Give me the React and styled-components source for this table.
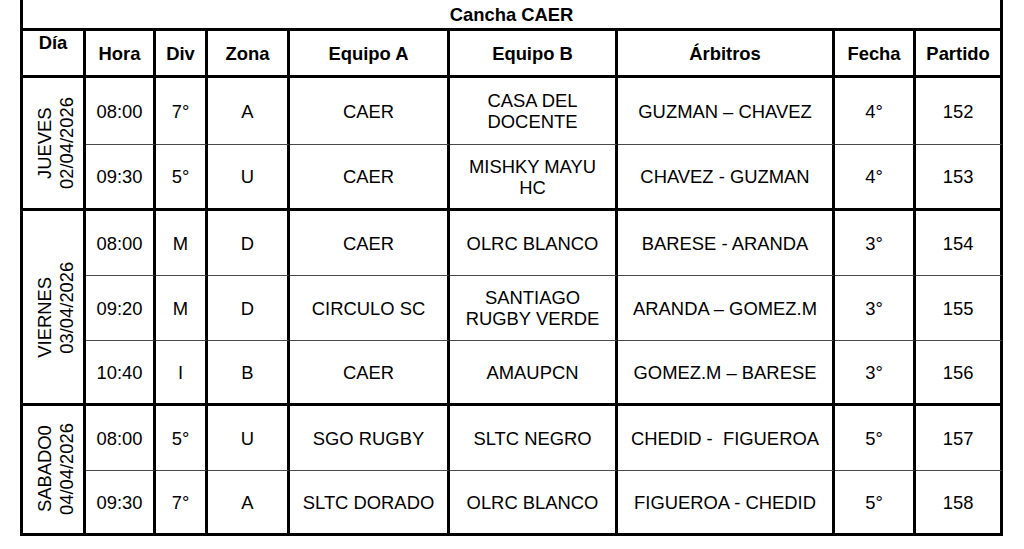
import React from "react";
import styled, { createGlobalStyle } from "styled-components";

const GlobalStyle = createGlobalStyle`
  html, body {
    margin: 0;
    padding: 0;
    background: #ffffff;
  }
  body {
    font-family: "Liberation Sans", Arial, sans-serif;
    color: #000;
  }
`;

const Page = styled.div`
  padding-left: 20px;
  width: 1024px;
  height: 549px;
  box-sizing: border-box;
  overflow: hidden;
`;

const Table = styled.table`
  border-collapse: separate;
  border-spacing: 0;
  table-layout: fixed;
  width: 983px;
  border-left: 3px solid #000;
  font-size: 18.4px;
  line-height: 21px;
`;

const Row = styled.tr`
  height: ${(p) => p.$h}px;
`;

const TitleCell = styled.th`
  padding: 0;
  border-right: 3px solid #000;
  border-bottom: 3px solid #000;
  font-weight: bold;
  text-align: center;
  vertical-align: middle;
`;

const HeadCell = styled.th`
  padding: ${(p) => (p.$top ? "1px 0 0" : "0")};
  border-right: 3px solid #000;
  border-bottom: 3px solid #000;
  font-weight: bold;
  text-align: center;
  vertical-align: ${(p) => (p.$top ? "top" : "middle")};
`;

const DayCell = styled.td`
  padding: 0 0 0 6px;
  border-right: 3px solid #000;
  border-bottom: 3px solid #000;
  text-align: center;
  vertical-align: middle;
`;

const DayLabel = styled.div`
  writing-mode: vertical-rl;
  transform: rotate(180deg);
  text-align: center;
  margin: 0 auto;
  line-height: 22px;
`;

const DayName = styled.span`
  display: inline-block;
  padding-inline-end: ${(p) => p.$shift || 0}px;
`;

const Cell = styled.td`
  padding: 0 2px;
  border-right: 3px solid #000;
  border-bottom: ${(p) => (p.$last ? "3px solid #000" : "1px solid #4a4a4a")};
  text-align: center;
  vertical-align: middle;
`;

const widths = [63, 70, 52, 82, 160, 168, 217, 81, 87];
const headers = ["Hora", "Div", "Zona", "Equipo A", "Equipo B", "Árbitros", "Fecha", "Partido"];

const groups = [
  {
    day: "JUEVES",
    date: "02/04/2026",
    shift: 0,
    rows: [
      { h: 67, c: ["08:00", "7°", "A", "CAER", ["CASA DEL", "DOCENTE"], "GUZMAN – CHAVEZ", "4°", "152"] },
      { h: 66, c: ["09:30", "5°", "U", "CAER", ["MISHKY MAYU", "HC"], "CHAVEZ - GUZMAN", "4°", "153"] },
    ],
  },
  {
    day: "VIERNES",
    date: "03/04/2026",
    shift: 20,
    rows: [
      { h: 65, c: ["08:00", "M", "D", "CAER", "OLRC BLANCO", "BARESE - ARANDA", "3°", "154"] },
      { h: 65, c: ["09:20", "M", "D", "CIRCULO SC", ["SANTIAGO", "RUGBY VERDE"], "ARANDA – GOMEZ.M", "3°", "155"] },
      { h: 65, c: ["10:40", "I", "B", "CAER", "AMAUPCN", "GOMEZ.M – BARESE", "3°", "156"] },
    ],
  },
  {
    day: "SABADO0",
    date: "04/04/2026",
    shift: 0,
    rows: [
      { h: 65, c: ["08:00", "5°", "U", "SGO RUGBY", "SLTC NEGRO", "CHEDID -\u00a0 FIGUEROA", "5°", "157"] },
      { h: 65, c: ["09:30", "7°", "A", "SLTC DORADO", "OLRC BLANCO", "FIGUEROA - CHEDID", "5°", "158"] },
    ],
  },
];

function renderContent(v) {
  if (Array.isArray(v)) {
    return v.map((line, i) => (
      <React.Fragment key={i}>
        {i > 0 && <br />}
        {line}
      </React.Fragment>
    ));
  }
  return v;
}

export default function App() {
  return (
    <>
      <GlobalStyle />
      <Page>
        <Table>
          <colgroup>
            {widths.map((w, i) => (
              <col key={i} style={{ width: w }} />
            ))}
          </colgroup>
          <thead>
            <Row $h={31}>
              <TitleCell colSpan={9}>Cancha CAER</TitleCell>
            </Row>
            <Row $h={47}>
              <HeadCell $top>Día</HeadCell>
              {headers.map((h) => (
                <HeadCell key={h}>{h}</HeadCell>
              ))}
            </Row>
          </thead>
          <tbody>
            {groups.map((g) =>
              g.rows.map((r, ri) => (
                <Row key={g.day + ri} $h={r.h}>
                  {ri === 0 && (
                    <DayCell rowSpan={g.rows.length}>
                      <DayLabel>
                        <DayName $shift={g.shift}>{g.day}</DayName>
                        <br />
                        {g.date}
                      </DayLabel>
                    </DayCell>
                  )}
                  {r.c.map((v, ci) => (
                    <Cell key={ci} $last={ri === g.rows.length - 1}>
                      {renderContent(v)}
                    </Cell>
                  ))}
                </Row>
              ))
            )}
          </tbody>
        </Table>
      </Page>
    </>
  );
}
